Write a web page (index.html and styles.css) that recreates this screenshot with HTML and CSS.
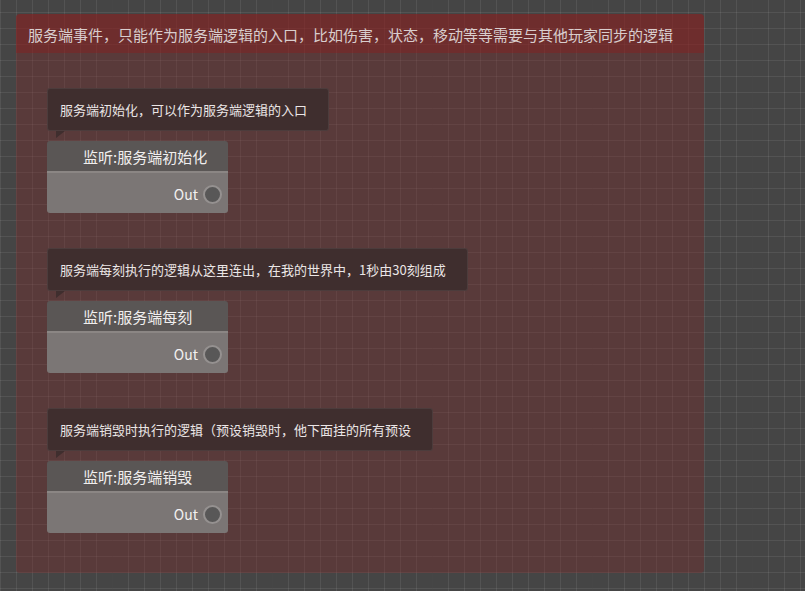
FILE: index.html
```html
<!DOCTYPE html>
<html lang="zh">
<head>
<meta charset="utf-8">
<title>服务端事件</title>
<link rel="stylesheet" href="styles.css">
</head>
<body>
<div class="canvas">
  <div class="group">
    <div class="group-header">服务端事件，只能作为服务端逻辑的入口，比如伤害，状态，移动等等需要与其他玩家同步的逻辑</div>
    <div class="group-body">
      <div class="entry">
        <div class="comment">服务端初始化，可以作为服务端逻辑的入口</div>
        <div class="node">
          <div class="node-title">监听:服务端初始化</div>
          <div class="node-body"><span class="port-label">Out</span><span class="port"></span></div>
        </div>
      </div>
      <div class="entry">
        <div class="comment">服务端每刻执行的逻辑从这里连出，在我的世界中，1秒由30刻组成</div>
        <div class="node">
          <div class="node-title">监听:服务端每刻</div>
          <div class="node-body"><span class="port-label">Out</span><span class="port"></span></div>
        </div>
      </div>
      <div class="entry">
        <div class="comment">服务端销毁时执行的逻辑（预设销毁时，他下面挂的所有预设</div>
        <div class="node">
          <div class="node-title">监听:服务端销毁</div>
          <div class="node-body"><span class="port-label">Out</span><span class="port"></span></div>
        </div>
      </div>
    </div>
  </div>
</div>
</body>
</html>
```

FILE: styles.css
```css
html, body {
  margin: 0;
  padding: 0;
}
body {
  width: 805px;
  height: 591px;
  overflow: hidden;
  font-family: "Noto Sans CJK SC", "Noto Sans", sans-serif;
}
.canvas {
  box-sizing: border-box;
  width: 805px;
  height: 591px;
  padding: 14px 0 0 16px;
  background-color: #454545;
  background-image:
    linear-gradient(to right, rgba(0,0,0,0.16) 1px, transparent 1px),
    linear-gradient(to right, rgba(255,255,255,0.075) 1px, transparent 1px),
    linear-gradient(to bottom, rgba(255,255,255,0.075) 1px, transparent 1px);
  background-size: 160px 100%, 16px 16px, 16px 16px;
  background-position: 112px 0, 0 0, 0 12px;
}
.group {
  width: 688px;
  height: 559px;
  border-radius: 4px;
  overflow: hidden;
  background: rgba(125, 40, 40, 0.36);
}
.group-header {
  box-sizing: border-box;
  height: 39px;
  padding: 11px 0 0 12px;
  font-size: 15px;
  line-height: 20px;
  color: #d9cdcd;
  background: rgba(140, 28, 28, 0.42);
  white-space: nowrap;
}
.group-body {
  display: flex;
  flex-direction: column;
  gap: 35px;
  padding: 35px 0 0 31px;
}
.entry {
  display: flex;
  flex-direction: column;
  align-items: flex-start;
  gap: 10px;
}
.comment {
  position: relative;
  box-sizing: border-box;
  height: 43px;
  padding: 0 21px 0 12px;
  display: flex;
  align-items: center;
  font-size: 13px;
  color: #ebe6e6;
  white-space: nowrap;
  background: #3f2e2e;
  border: 1px solid rgba(255,255,255,0.07);
  border-radius: 3px;
}
.comment::after {
  content: "";
  position: absolute;
  left: 8px;
  top: 100%;
  margin-top: 1px;
  width: 0;
  height: 0;
  border-right: 9px solid transparent;
  border-top: 7px solid #3f2e2e;
}
.node {
  width: 181px;
  border-radius: 3px;
  overflow: hidden;
}
.node-title {
  box-sizing: border-box;
  height: 32px;
  padding-left: 36px;
  display: flex;
  align-items: center;
  font-size: 15px;
  color: #f0eeee;
  background: #5a5655;
  white-space: nowrap;
  border-bottom: 2px solid #8b8684;
}
.node-body {
  height: 40px;
  display: flex;
  align-items: center;
  justify-content: flex-end;
  gap: 5px;
  padding-right: 6px;
  padding-top: 2px;
  box-sizing: border-box;
  background: #7b7675;
}
.port-label {
  font-size: 14px;
  color: #f2f0f0;
  line-height: 1;
}
.port {
  box-sizing: border-box;
  width: 19px;
  height: 19px;
  border-radius: 50%;
  background: #585757;
  border: 2px solid #959190;
}
```
